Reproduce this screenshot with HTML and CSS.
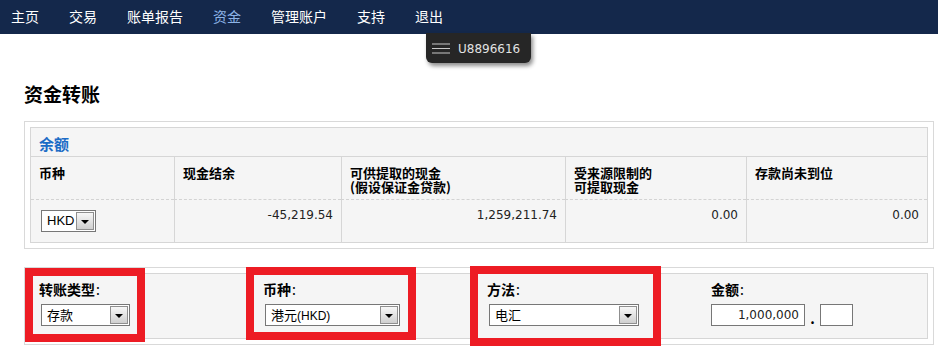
FILE: index.html
```html
<!DOCTYPE html>
<html lang="zh-CN">
<head>
<meta charset="utf-8">
<title>资金转账</title>
<link rel="stylesheet" href="styles.css">
</head>
<body>
<nav class="topnav">
  <a class="nav-item">主页</a>
  <a class="nav-item">交易</a>
  <a class="nav-item">账单报告</a>
  <a class="nav-item active">资金</a>
  <a class="nav-item">管理账户</a>
  <a class="nav-item">支持</a>
  <a class="nav-item">退出</a>
</nav>
<div class="user-badge">
  <svg class="menu-icon" width="18" height="11" viewBox="0 0 18 11"><path d="M0 1h18M0 5.5h18M0 10h18" stroke="#c8c8c8" stroke-width="1.2"/></svg>
  <span class="user-id">U8896616</span>
</div>
<main class="page">
  <h1 class="title">资金转账</h1>
  <section class="panel">
    <table class="balance-table">
      <colgroup>
        <col class="col1"><col class="col2"><col class="col3"><col class="col4"><col class="col5">
      </colgroup>
      <tr>
        <th class="caption" colspan="5">余额</th>
      </tr>
      <tr class="head-row">
        <th>币种</th>
        <th>现金结余</th>
        <th>可供提取的现金<br>(假设保证金贷款)</th>
        <th>受来源限制的<br>可提取现金</th>
        <th>存款尚未到位</th>
      </tr>
      <tr class="data-row">
        <td><div class="dropdown small"><span class="dd-text latin">HKD</span><span class="dd-btn"></span></div></td>
        <td class="num">-45,219.54</td>
        <td class="num">1,259,211.74</td>
        <td class="num">0.00</td>
        <td class="num">0.00</td>
      </tr>
    </table>
  </section>
  <section class="panel">
    <div class="form-grid">
      <div class="field">
        <div class="field-label">转账类型<span class="colon">:</span></div>
        <div class="dropdown w-type"><span class="dd-text">存款</span><span class="dd-btn"></span></div>
        <div class="highlight hl-1"></div>
      </div>
      <div class="field">
        <div class="field-label">币种<span class="colon">:</span></div>
        <div class="dropdown w-cur"><span class="dd-text">港元<span class="latin">(HKD)</span></span><span class="dd-btn"></span></div>
        <div class="highlight hl-2"></div>
      </div>
      <div class="field">
        <div class="field-label">方法<span class="colon">:</span></div>
        <div class="dropdown w-method"><span class="dd-text">电汇</span><span class="dd-btn"></span></div>
        <div class="highlight hl-3"></div>
      </div>
      <div class="field">
        <div class="field-label">金额<span class="colon">:</span></div>
        <div class="amount-row">
          <span class="text-input amount">1,000,000</span>
          <span class="dot">.</span>
          <span class="text-input cents"></span>
        </div>
      </div>
    </div>
  </section>
</main>
</body>
</html>
```
FILE: styles.css
```css
* { box-sizing: border-box; }
html, body { margin: 0; padding: 0; background: #fff; }
body {
  font-family: "Noto Sans CJK SC", "DejaVu Sans", sans-serif;
  color: #000;
  width: 938px;
  height: 358px;
  overflow: hidden;
  position: relative;
}

.topnav {
  height: 34px;
  background: #14284b;
  display: flex;
  gap: 30px;
  padding-left: 11px;
}
.nav-item {
  color: #fff;
  font-size: 14px;
  line-height: 33px;
  text-decoration: none;
}
.nav-item.active { color: #8cb3e6; }

.user-badge {
  position: absolute;
  left: 426px;
  top: 33px;
  width: 105px;
  height: 30px;
  background: #262626;
  border-radius: 0 0 6px 6px;
  box-shadow: 2px 3px 4px rgba(0,0,0,0.45);
  display: flex;
  align-items: center;
  padding: 1px 0 0 6px;
  gap: 8px;
}
.menu-icon { display: block; }
.user-id {
  font-family: "DejaVu Sans", sans-serif;
  font-size: 12px;
  color: #e2e2e2;
}

.page {
  padding: 0 4px 0 24px;
}
.title {
  margin: 48px 0 15px 0;
  font-size: 19px;
  line-height: 24px;
  font-weight: bold;
  height: 24px;
}

.panel {
  width: 910px;
  border: 1px solid #d9d9d9;
  padding: 5px;
  margin-bottom: 18px;
}

.balance-table {
  width: 898px;
  border-collapse: separate;
  border-spacing: 0;
  table-layout: fixed;
  border: 1px solid #d6d6d6;
  background: #f5f5f5;
}
.balance-table th, .balance-table td {
  padding: 0;
  vertical-align: top;
  text-align: left;
}
.col1 { width: 143px; }
.col2 { width: 167px; }
.col3 { width: 224px; }
.col4 { width: 181px; }
.col5 { width: 181px; }

.caption {
  height: 29px;
  border-bottom: 1px solid #d6d6d6;
  color: #1c6cc6;
  font-size: 15px;
  line-height: 18px;
  font-weight: 600;
  padding: 7px 8px 0 8px !important;
}
.head-row th {
  height: 43px;
  border-bottom: 1px dashed #d3d3d3;
  font-size: 13px;
  line-height: 14px;
  font-weight: bold;
  padding: 9px 8px 0 8px;
}
.head-row th + th, .data-row td + td { border-left: 1px solid #d6d6d6; }

.data-row td {
  height: 42px;
  padding: 8px 8px 0 8px;
}
.data-row .num {
  text-align: right;
  font-family: "DejaVu Sans", sans-serif;
  font-size: 12px;
  line-height: 14px;
  color: #222;
}

.dropdown {
  display: flex;
  align-items: center;
  height: 22px;
  border: 1px solid #777;
  background: #fff;
  font-size: 13px;
}
.dropdown.small { width: 55px; margin: 2px 0 0 2px; }
.dd-text {
  flex: 1;
  padding-left: 5px;
  line-height: 20px;
  white-space: nowrap;
}
.latin { font-family: "Liberation Sans", sans-serif; font-size: 12px; }
.dropdown.small .latin { font-size: 13px; }
.dd-btn {
  width: 18px;
  height: 18px;
  margin-right: 1px;
  border: 1px solid #8f8f8f;
  background: linear-gradient(#f7f7f7, #cfcfcf);
  position: relative;
}
.dd-btn::after {
  content: "";
  position: absolute;
  left: 4px;
  top: 7px;
  border-left: 4px solid transparent;
  border-right: 4px solid transparent;
  border-top: 4px solid #000;
}

.form-grid {
  display: grid;
  grid-template-columns: 224px 224px 224px 224px;
  width: 898px;
  height: 66px;
  border: 1px solid #d6d6d6;
  background: #f5f5f5;
}
.field {
  position: relative;
  padding: 6px 8px 0 8px;
}
.field-label {
  font-size: 14px;
  line-height: 18px;
  font-weight: bold;
  height: 24px;
}
.colon { font-weight: normal; margin-left: 1px; }
.field .dropdown { margin-left: 2px; }
.w-type { width: 89px; }
.w-cur { width: 135px; }
.w-method { width: 150px; }

.amount-row {
  display: flex;
  align-items: flex-end;
}
.text-input {
  display: block;
  height: 22px;
  border: 1px solid #777;
  background: #fff;
  font-family: "DejaVu Sans", sans-serif;
  font-size: 12px;
  line-height: 20px;
  color: #222;
  text-align: right;
  padding-right: 5px;
}
.amount { width: 94px; }
.cents { width: 33px; }
.dot {
  width: 15px;
  text-align: center;
  font-weight: bold;
  font-size: 14px;
  line-height: 16px;
}

.highlight {
  position: absolute;
  border: 8px solid #ed1c24;
  pointer-events: none;
}
.hl-1 { left: -6px; top: -6px; width: 120px; height: 74px; }
.hl-2 { left: -9px; top: -7px; width: 170px; height: 73px; }
.hl-3 { left: -9px; top: -8px; width: 191px; height: 80px; }
```
